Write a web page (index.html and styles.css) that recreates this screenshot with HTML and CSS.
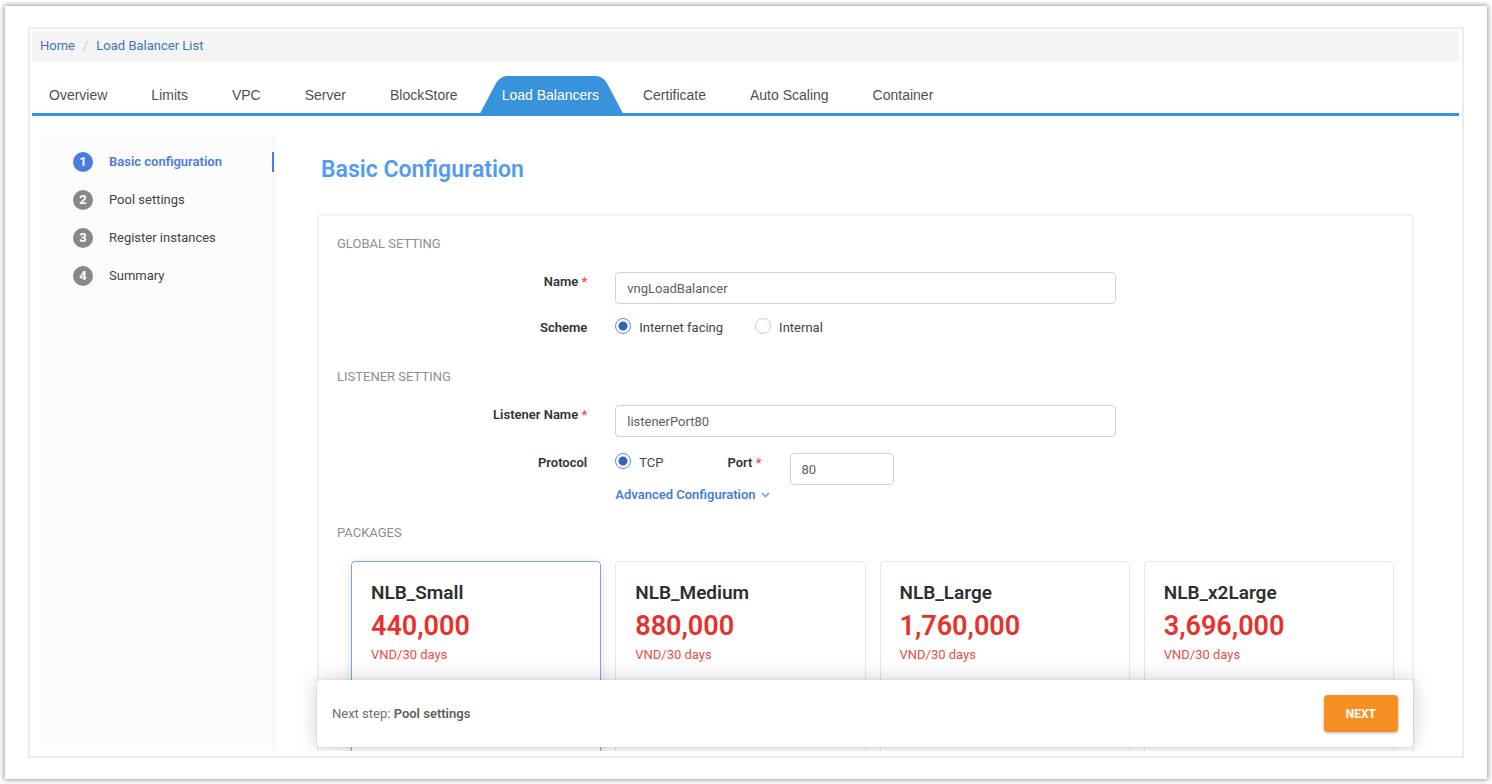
FILE: index.html
```html
<!DOCTYPE html>
<html lang="en">
<head>
<meta charset="utf-8">
<meta name="viewport" content="width=device-width, initial-scale=1">
<title>Load Balancer - Basic Configuration</title>
<link rel="stylesheet" href="styles.css">
</head>
<body>
<div class="sheet">
  <div class="frame">
    <nav class="breadcrumb" aria-label="Breadcrumb">
      <a href="#home">Home</a><span class="breadcrumb-sep">/</span><a href="#list">Load Balancer List</a>
    </nav>
    <nav class="tabs" aria-label="Sections">
      <a class="tab" href="#overview">Overview</a>
      <a class="tab" href="#limits">Limits</a>
      <a class="tab" href="#vpc">VPC</a>
      <a class="tab" href="#server">Server</a>
      <a class="tab" href="#blockstore">BlockStore</a>
      <a class="tab tab-active" href="#lb" aria-current="page"><span class="tab-text">Load Balancers</span></a>
      <a class="tab" href="#certificate">Certificate</a>
      <a class="tab" href="#scaling">Auto Scaling</a>
      <a class="tab" href="#container">Container</a>
    </nav>
    <div class="body">
      <ol class="steps">
        <li class="step step-active"><span class="step-num">1</span>Basic configuration</li>
        <li class="step"><span class="step-num">2</span>Pool settings</li>
        <li class="step"><span class="step-num">3</span>Register instances</li>
        <li class="step"><span class="step-num">4</span>Summary</li>
      </ol>
      <main class="main">
        <h1 class="title">Basic Configuration</h1>
        <form class="panel">
          <h2 class="section">Global Setting</h2>
          <div class="row">
            <label class="label" for="name">Name <span class="req">*</span></label>
            <input class="input" id="name" type="text" value="vngLoadBalancer">
          </div>
          <div class="row row-scheme">
            <span class="label" id="scheme-label">Scheme</span>
            <div class="options" role="radiogroup" aria-labelledby="scheme-label">
              <label class="option"><input class="radio" type="radio" name="scheme" checked>Internet facing</label>
              <label class="option"><input class="radio" type="radio" name="scheme">Internal</label>
            </div>
          </div>
          <h2 class="section">Listener Setting</h2>
          <div class="row">
            <label class="label" for="listener">Listener Name <span class="req">*</span></label>
            <input class="input" id="listener" type="text" value="listenerPort80">
          </div>
          <div class="row row-protocol">
            <span class="label">Protocol</span>
            <div class="protocol">
              <label class="option"><input class="radio" type="radio" name="protocol" checked>TCP</label>
              <label class="label port-label" for="port">Port <span class="req">*</span></label>
              <input class="input port" id="port" type="text" value="80">
            </div>
            <button class="advanced" type="button">Advanced Configuration
              <svg class="chevron" viewBox="0 0 9 6" aria-hidden="true"><path d="M1 1l3.5 3.5L8 1"/></svg>
            </button>
          </div>
          <h2 class="section">Packages</h2>
          <div class="packages">
            <article class="card card-selected">
              <h3 class="card-name">NLB_Small</h3>
              <div class="price">440,000</div>
              <div class="unit">VND/30 days</div>
            </article>
            <article class="card">
              <h3 class="card-name">NLB_Medium</h3>
              <div class="price">880,000</div>
              <div class="unit">VND/30 days</div>
            </article>
            <article class="card">
              <h3 class="card-name">NLB_Large</h3>
              <div class="price">1,760,000</div>
              <div class="unit">VND/30 days</div>
            </article>
            <article class="card">
              <h3 class="card-name">NLB_x2Large</h3>
              <div class="price">3,696,000</div>
              <div class="unit">VND/30 days</div>
            </article>
          </div>
        </form>
        <div class="footer">
          <div>Next step: <strong class="next-name">Pool settings</strong></div>
          <button class="next" type="button">NEXT</button>
        </div>
      </main>
    </div>
  </div>
</div>
</body>
</html>
```
FILE: styles.css
```css
* {
  box-sizing: border-box;
}

body {
  margin: 0;
  height: 100vh;
  padding: 6px 5px 5px;
  background: #fff;
  color: #444;
  font: 13px/20px Roboto, "Liberation Sans", sans-serif;
}

a {
  text-decoration: none;
}

h1, h2, h3, ol {
  margin: 0;
  padding: 0;
}

.sheet {
  height: 100%;
  padding: 21px 23px;
  background: #fff;
  box-shadow: 0 0 5px 1px rgba(0, 0, 0, 0.4);
}

.frame {
  display: flex;
  flex-direction: column;
  height: 100%;
  padding: 2px 3px 5px 2px;
  border: 2px solid #ededed;
}

.breadcrumb {
  flex: none;
  display: flex;
  gap: 8px;
  padding: 5px 8px 6px;
  background: #f4f4f4;
}

.breadcrumb a {
  color: #3f76b4;
}

.breadcrumb-sep {
  color: #ccc;
}

.tabs {
  flex: none;
  display: flex;
  margin-top: 14px;
  padding: 0 17px;
  border-bottom: 3px solid #3893da;
}

.tab {
  position: relative;
  padding: 9px 22px 8px;
  color: #505050;
  font-family: "Liberation Sans", Arial, sans-serif;
  font-size: 14px;
  white-space: nowrap;
}

.tab:first-child {
  padding-left: 0;
}

.tab-active {
  color: #fff;
}

.tab-active::before,
.tab-active::after {
  content: "";
  position: absolute;
  top: 0;
  bottom: 0;
  background: #3893da;
}

.tab-active::before {
  left: 10px;
  right: 40%;
  border-top-left-radius: 7px;
  transform: skewX(-28deg);
}

.tab-active::after {
  left: 40%;
  right: 8px;
  border-top-right-radius: 7px;
  transform: skewX(28deg);
}

.tab-text {
  position: relative;
  z-index: 1;
}

.body {
  flex: 1;
  display: flex;
  min-height: 0;
  margin-top: 18px;
  padding-left: 8px;
}

.steps {
  flex: none;
  width: 235px;
  padding: 18px 0 0 33px;
  border-right: 2px solid #f7f7f7;
  background: #fcfcfc;
  list-style: none;
}

.step {
  display: flex;
  align-items: center;
  gap: 16px;
  margin-bottom: 18px;
}

.step-active {
  margin-right: -1px;
  border-right: 2px solid #4a7be0;
  color: #4a7be0;
  font-weight: 600;
}

.step-num {
  width: 20px;
  height: 20px;
  border-radius: 50%;
  background: #888;
  color: #fff;
  font-weight: 700;
  text-align: center;
}

.step-active .step-num {
  background: #4a7be0;
}

.main {
  position: relative;
  flex: 1;
  display: flex;
  flex-direction: column;
  min-width: 0;
  padding: 0 45px 0 42px;
  overflow: hidden;
}

.title {
  flex: none;
  padding: 21px 4px 29px;
  color: #539bf2;
  font-size: 23px;
  font-weight: 600;
  line-height: 30px;
}

.panel {
  flex: 1 0 auto;
  padding: 18px 18px 0;
  border: 2px solid #f1f1f1;
  border-bottom: 0;
  border-radius: 4px 4px 0 0;
}

.section {
  color: #8e8e8e;
  font-size: 13px;
  font-weight: 400;
  line-height: 20px;
  text-transform: uppercase;
}

.row {
  display: grid;
  grid-template-columns: 1fr 2fr 1fr;
  column-gap: 28px;
  margin-top: 18px;
}

.label {
  color: #333;
  font-weight: 600;
  text-align: right;
}

.req {
  color: #f5474c;
}

.input {
  width: 100%;
  height: 32px;
  padding: 0 11px;
  border: 1px solid #d2d2d2;
  border-radius: 4px;
  background: #fff;
  color: #606060;
  font: inherit;
}

.row-scheme {
  margin: 14px 0 29px;
}

.options {
  display: flex;
  gap: 32px;
}

.option {
  display: flex;
  align-items: flex-start;
  gap: 8px;
}

.radio {
  appearance: none;
  width: 16px;
  height: 16px;
  margin: 0;
  border: 1px solid #ccc;
  border-radius: 50%;
  background: #fff;
}

.radio:checked {
  border-color: #5d8ed2;
  background: radial-gradient(circle, #3464b8 4px, #fff 5px);
}

.row-protocol {
  margin: 16px 0 18px;
}

.protocol {
  display: flex;
  align-items: flex-start;
}

.port-label {
  margin-left: 64px;
}

.port {
  width: 104px;
  margin-left: 28px;
}

.advanced {
  grid-column: 2;
  display: flex;
  align-items: center;
  justify-self: start;
  gap: 5px;
  padding: 0;
  border: 0;
  background: none;
  color: #4a7be0;
  font: inherit;
  font-weight: 600;
}

.chevron {
  width: 9px;
  height: 6px;
  fill: none;
  stroke: #6f9ee8;
  stroke-width: 1.7;
}

.packages {
  display: grid;
  grid-template-columns: repeat(4, 1fr);
  gap: 14px;
  margin: 18px 0 0 14px;
}

.card {
  min-height: 220px;
  padding: 18px 19px;
  border: 1px solid #e6e6e6;
  border-radius: 4px;
  background: #fff;
}

.card-selected {
  border-color: #7fa5e6;
  box-shadow: 0 2px 12px rgba(0, 0, 0, 0.12);
}

.card-name {
  color: #2f2f2f;
  font-size: 19px;
  font-weight: 600;
  line-height: 26px;
}

.price {
  color: #e8312c;
  font-size: 27px;
  font-weight: 600;
  line-height: 40px;
}

.unit {
  color: #ea4b48;
  line-height: 18px;
}

.footer {
  position: absolute;
  right: 46px;
  bottom: 4px;
  left: 42px;
  display: flex;
  align-items: center;
  justify-content: space-between;
  padding: 15px;
  border-radius: 4px;
  background: #fff;
  box-shadow: 0 0 20px rgba(0, 0, 0, 0.2), 0 0 2px rgba(0, 0, 0, 0.15);
  color: #6e6e6e;
}

.next-name {
  color: #606060;
  font-weight: 600;
}

.next {
  height: 37px;
  padding: 0 22px;
  border: 0;
  border-radius: 4px;
  background: #f78f22;
  box-shadow: 0 1px 3px rgba(0, 0, 0, 0.3);
  color: #fff;
  font: inherit;
  font-size: 12px;
  font-weight: 700;
}
```
